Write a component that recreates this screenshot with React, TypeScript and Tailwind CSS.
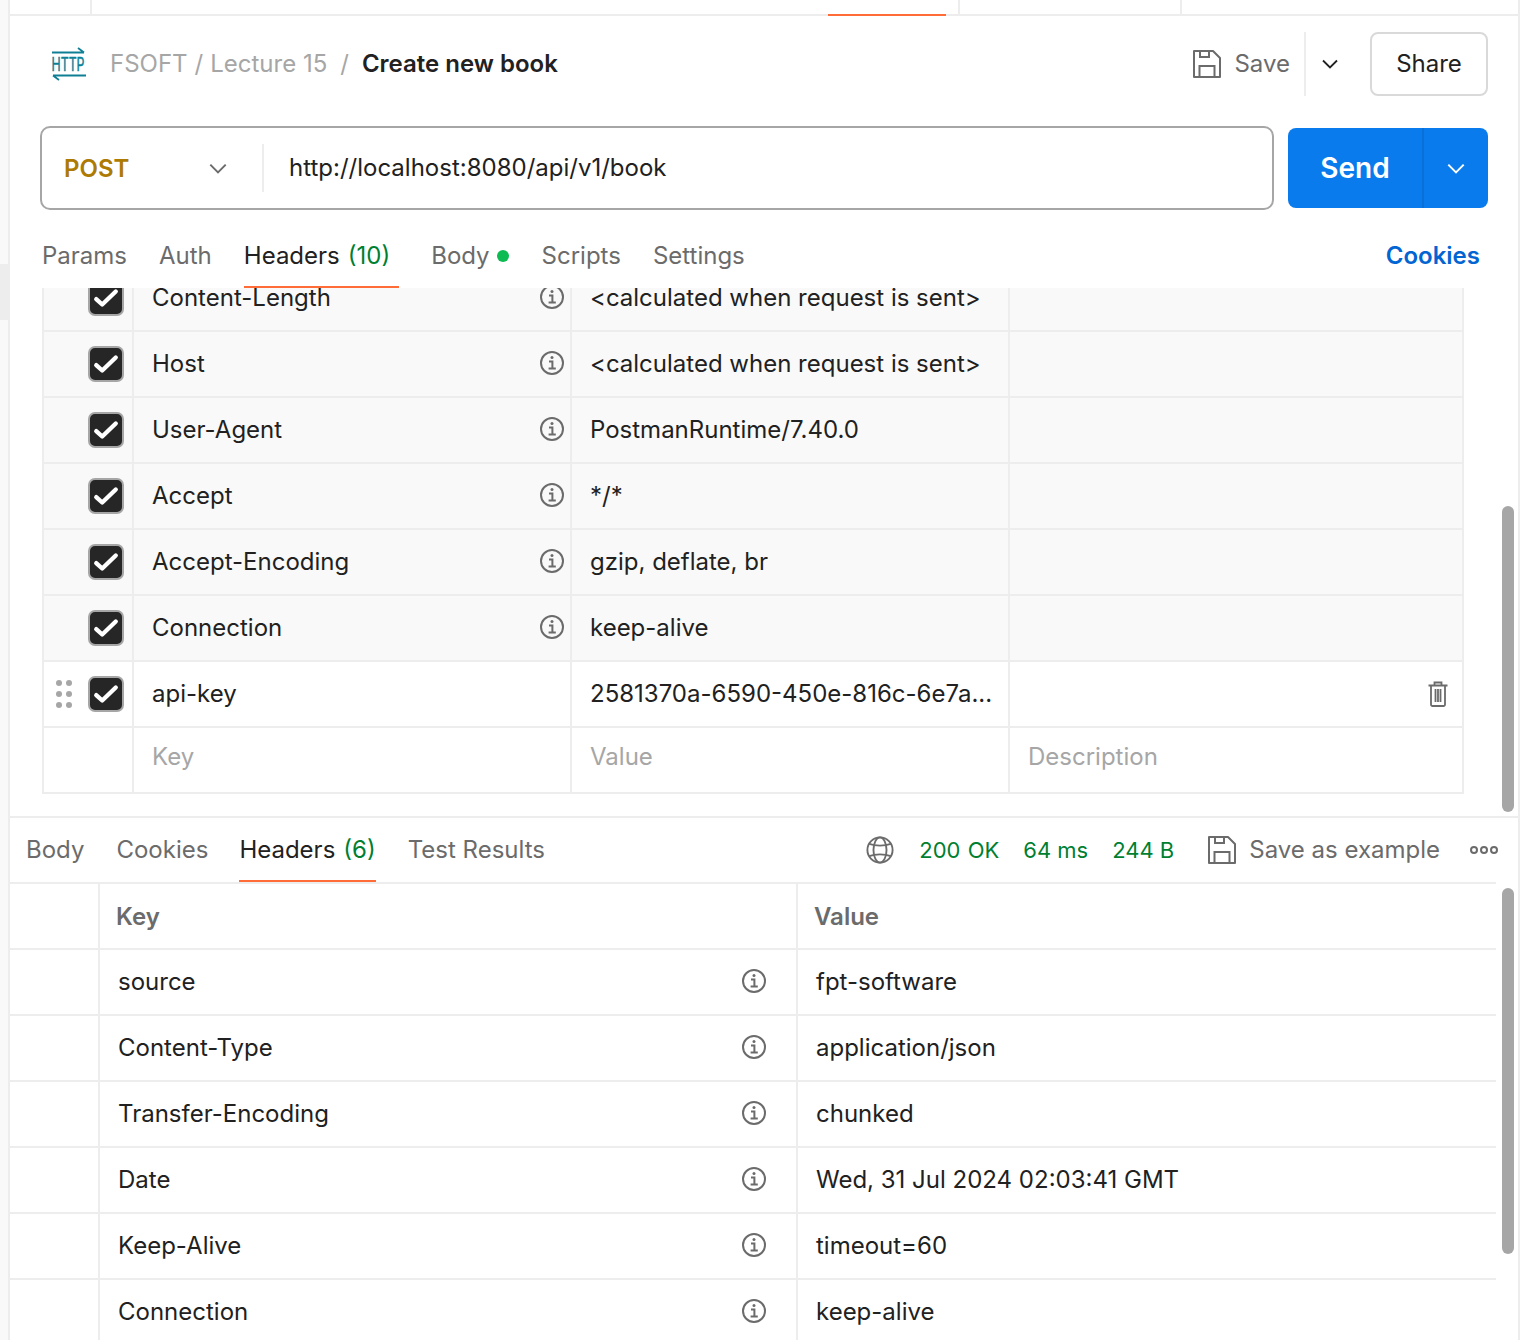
import React from "react";

const Chevron = ({ cls }: { cls: string }) => (
  <svg viewBox="0 0 16 10" className={cls} fill="none" stroke="currentColor" strokeWidth="1.800">
    <path d="M1 1.500 8 8.500 15 1.500" />
  </svg>
);

const Info = () => (
  <svg viewBox="0 0 24 24" className="w-6 h-6 mb-[2px] text-[#6b6b6b]" fill="none" stroke="currentColor">
    <circle cx="12" cy="12" r="11" strokeWidth="2" />
    <circle cx="12" cy="6.600" r="1.500" fill="currentColor" stroke="none" />
    <path d="M9 10.500h3.400v7M8.600 17.600h7.200" strokeWidth="2" />
  </svg>
);

const Floppy = ({ cls }: { cls: string }) => (
  <svg viewBox="0 0 28 28" className={cls} fill="none" stroke="currentColor" strokeWidth="2">
    <path d="M1 1h19l7 7v19H1z" strokeLinejoin="round" />
    <path d="M7 1v6h9V1M6.500 27V16h15v11" />
  </svg>
);

const Check = () => (
  <span className="w-9 h-9 rounded-[7px] bg-[#262626] border-2 border-[#a6a6a6] flex items-center justify-center shrink-0">
    <svg viewBox="0 0 24 24" className="w-[26px] h-[26px]" fill="none" stroke="#fff" strokeWidth="4" strokeLinecap="round" strokeLinejoin="round">
      <path d="M3 13l5.500 5L21 6" />
    </svg>
  </span>
);

const Grip = () => (
  <span className="absolute left-[12px] top-[18px] grid grid-cols-2 gap-x-[4px] gap-y-[5px]">
    {[0, 1, 2, 3, 4, 5].map((i) => (
      <span key={i} className="w-[6px] h-[6px] rounded-full bg-[#a6a6a6]" />
    ))}
  </span>
);

const Trash = () => (
  <svg viewBox="0 0 20 26" className="w-[20px] h-[26px] text-[#6b6b6b]" fill="none" stroke="currentColor" strokeWidth="1.800">
    <path d="M0.500 4.500h19M6.500 4V1.500h7V4M3 5v18.500a1.500 1.500 0 0 0 1.500 1.500h11a1.500 1.500 0 0 0 1.500-1.500V5M7.500 8v13M10 8v13M12.500 8v13" />
  </svg>
);

const Globe = () => (
  <svg viewBox="0 0 30 30" className="w-[28px] h-[30px] text-[#6b6b6b]" fill="none" stroke="currentColor" strokeWidth="2">
    <circle cx="15" cy="15" r="13.500" />
    <ellipse cx="15" cy="15" rx="7" ry="13.500" />
    <path d="M3.500 8.500c6 2.500 17 2.500 23 0M3.500 21.500c6-2.500 17-2.500 23 0" />
  </svg>
);

const HttpIcon = () => (
  <svg viewBox="0 0 36 34" className="w-[36px] h-[34px] text-[#0f7f94]" fill="none" stroke="currentColor" strokeWidth="1.800">
    <path d="M1 5.500h32M27 1l6 4.500M2 28.500h33M2 28.500l6 4.500" />
    <text x="0.500" y="23.500" fontSize="19" fill="currentColor" stroke="currentColor" strokeWidth="0.500" textLength="33" lengthAdjust="spacingAndGlyphs" fontFamily="Inter, sans-serif">HTTP</text>
  </svg>
);

const reqRows: [string, string][] = [
  ["Content-Length", "<calculated when request is sent>"],
  ["Host", "<calculated when request is sent>"],
  ["User-Agent", "PostmanRuntime/7.40.0"],
  ["Accept", "*/*"],
  ["Accept-Encoding", "gzip, deflate, br"],
  ["Connection", "keep-alive"],
];

const resRows: [string, string][] = [
  ["source", "fpt-software"],
  ["Content-Type", "application/json"],
  ["Transfer-Encoding", "chunked"],
  ["Date", "Wed, 31 Jul 2024 02:03:41 GMT"],
  ["Keep-Alive", "timeout=60"],
  ["Connection", "keep-alive"],
];

const Tab = ({ children, active, cls }: { children: React.ReactNode; active?: boolean; cls?: string }) => (
  <span className={`${active ? "text-[#212121]" : "text-[#6b6b6b]"} ${cls ?? ""}`}>{children}</span>
);

export default function App() {
  return (
    <div className="w-[1520px] h-[1340px] flex overflow-hidden bg-white text-[24px] leading-[32px] text-[#212121] font-['Inter',sans-serif]">
      <div className="w-[10px] shrink-0 bg-[#f9f9f9] border-r-2 border-[#ededed] flex flex-col">
        <div className="mt-[264px] h-[56px] bg-[#ededed]" />
      </div>

      <div className="flex-1 min-w-0 flex flex-col border-r-2 border-[#ededed]">
        {/* top tabs */}
        <div className="h-4 shrink-0 border-b-2 border-[#ededed] flex">
          <div className="w-[82px] border-r-2 border-[#ededed]" />
          <div className="w-[736px]" />
          <div className="w-[118px] -mb-[2px] border-b-2 border-[#ff6c37]" />
          <div className="w-[14px] border-r-2 border-[#ededed]" />
          <div className="w-[222px] border-r-2 border-[#ededed]" />
        </div>

        {/* breadcrumb */}
        <div className="h-[110px] shrink-0 flex items-start pt-[16px] pl-[41px] pr-[30px]">
          <div className="flex items-center h-16">
            <HttpIcon />
            <span className="ml-[23px] text-[#a6a6a6]">FSOFT</span>
            <span className="ml-[7px] text-[#a6a6a6]">/</span>
            <span className="ml-[7px] text-[#a6a6a6]">Lecture 15</span>
            <span className="ml-[13px] text-[#a6a6a6]">/</span>
            <span className="ml-[13px] font-semibold">Create new book</span>
          </div>
          <div className="ml-auto flex items-center h-16">
            <Floppy cls="w-[28px] h-[28px] text-[#6b6b6b]" />
            <span className="ml-[13px] text-[#6b6b6b]">Save</span>
            <span className="ml-[14px] w-[2px] h-16 bg-[#ededed]" />
            <Chevron cls="ml-[16px] w-[16px] h-[10px] text-[#212121]" />
            <span className="ml-[32px] w-[118px] h-16 rounded-[8px] border-2 border-[#d9d9d9] flex items-center justify-center">Share</span>
          </div>
        </div>

        {/* url row */}
        <div className="h-[84px] shrink-0 flex items-center pl-[30px] pr-[30px]">
          <div className="flex-1 h-[84px] rounded-[10px] border-2 border-[#a6a6a6] flex items-center">
            <span className="ml-[22px] mt-[2px] w-[145px] font-semibold text-[#ad7a03]">POST</span>
            <Chevron cls="w-[18px] h-[11px] text-[#6b6b6b]" />
            <span className="ml-[35px] w-[2px] h-[48px] bg-[#ededed]" />
            <span className="ml-[25px]">http://localhost:8080/api/v1/book</span>
          </div>
          <div className="ml-[14px] w-[200px] h-[80px] rounded-[8px] bg-[#097bed] flex items-center text-white">
            <span className="w-[134px] text-center text-[28px] font-semibold">Send</span>
            <span className="w-[2px] h-full bg-[#0a6fd6]" />
            <span className="flex-1 flex justify-center">
              <Chevron cls="w-[18px] h-[11px] text-white" />
            </span>
          </div>
        </div>

        {/* request tabs */}
        <div className="h-[78px] shrink-0 flex items-start pl-[32px] pr-[38px] pt-[30px] relative">
          <Tab>Params</Tab>
          <Tab cls="ml-[32px]">Auth</Tab>
          <Tab active cls="ml-[32px] relative">
            Headers<span className="ml-[8px] text-[#007f31]">(10)</span>
            <span className="absolute left-0 -right-[9px] top-[46px] h-[2px] bg-[#ff6c37]" />
          </Tab>
          <Tab cls="ml-[41px] flex items-center">
            Body<span className="ml-[7px] w-[12px] h-[12px] rounded-full bg-[#0cbb52]" />
          </Tab>
          <Tab cls="ml-[33px]">Scripts</Tab>
          <Tab cls="ml-[32px]">Settings</Tab>
          <span className="ml-auto font-semibold text-[#0265d2]">Cookies</span>
        </div>

        {/* request table */}
        <div className="h-[528px] shrink-0 overflow-hidden pl-[32px] pr-[54px] relative">
          <div className="-mt-[22px] border-x-2 border-b-2 border-[#ededed]">
            {reqRows.map(([k, v]) => (
              <div key={k} className="h-[66px] flex border-b-2 border-[#ededed] bg-[#f9f9f9]">
                <div className="w-[90px] shrink-0 border-r-2 border-[#ededed] pl-[44px] flex items-center"><Check /></div>
                <div className="w-[438px] shrink-0 border-r-2 border-[#ededed] pl-[18px] pr-[6px] flex items-center justify-between"><span>{k}</span><Info /></div>
                <div className="w-[438px] shrink-0 border-r-2 border-[#ededed] pl-[18px] flex items-center whitespace-nowrap">{v}</div>
                <div className="flex-1" />
              </div>
            ))}
            <div className="h-[66px] flex border-b-2 border-[#ededed] relative">
              <Grip />
              <div className="w-[90px] shrink-0 border-r-2 border-[#ededed] pl-[44px] flex items-center"><Check /></div>
              <div className="w-[438px] shrink-0 border-r-2 border-[#ededed] pl-[18px] flex items-center">api-key</div>
              <div className="w-[438px] shrink-0 border-r-2 border-[#ededed] pl-[18px] flex items-center whitespace-nowrap">2581370a-6590-450e-816c-6e7a...</div>
              <div className="flex-1 flex items-center justify-end pr-[14px]"><Trash /></div>
            </div>
            <div className="h-[64px] flex text-[#a6a6a6]">
              <div className="w-[90px] shrink-0 border-r-2 border-[#ededed]" />
              <div className="w-[438px] shrink-0 border-r-2 border-[#ededed] pl-[18px] pb-[6px] flex items-center">Key</div>
              <div className="w-[438px] shrink-0 border-r-2 border-[#ededed] pl-[18px] pb-[6px] flex items-center">Value</div>
              <div className="flex-1 pl-[18px] pb-[6px] flex items-center">Description</div>
            </div>
          </div>
          <div className="absolute right-[4px] top-[218px] w-[12px] h-[306px] rounded-full bg-[#a6a6a6]" />
        </div>

        {/* response tabs */}
        <div className="h-[66px] shrink-0 border-t-2 border-[#ededed] flex items-start pl-[16px] pt-[16px] relative">
          <Tab>Body</Tab>
          <Tab cls="ml-[32px]">Cookies</Tab>
          <Tab active cls="ml-[31px] relative">
            Headers<span className="ml-[8px] text-[#007f31]">(6)</span>
            <span className="absolute left-0 right-0 top-[46px] h-[2px] bg-[#ff6c37]" />
          </Tab>
          <Tab cls="ml-[32px]">Test Results</Tab>
          <div className="ml-auto flex items-center h-[32px] pr-[20px]">
            <Globe />
            <span className="ml-[25px] text-[#007f31] text-[22px] [word-spacing:1px]">200 OK</span>
            <span className="ml-[24px] text-[#007f31] text-[22px]">64 ms</span>
            <span className="ml-[24px] text-[#007f31] text-[22px]">244 B</span>
            <Floppy cls="ml-[34px] w-[28px] h-[28px] text-[#6b6b6b]" />
            <span className="ml-[13px] text-[#6b6b6b]">Save as example</span>
            <span className="ml-[30px] flex gap-[2px]">
              {[0, 1, 2].map((i) => (
                <span key={i} className="w-[8px] h-[8px] rounded-full border-2 border-[#6b6b6b]" />
              ))}
            </span>
          </div>
        </div>

        {/* response table */}
        <div className="flex-1 min-h-0 overflow-hidden relative">
          <div className="mr-[22px] border-t-2 border-[#ededed]">
            <div className="h-[66px] flex border-b-2 border-[#ededed] font-semibold text-[#6b6b6b]">
              <div className="w-[90px] shrink-0 border-r-2 border-[#ededed]" />
              <div className="w-[698px] shrink-0 border-r-2 border-[#ededed] pl-[16px] pt-[2px] flex items-center">Key</div>
              <div className="flex-1 pl-[16px] pt-[2px] flex items-center">Value</div>
            </div>
            {resRows.map(([k, v]) => (
              <div key={k} className="h-[66px] flex border-b-2 border-[#ededed]">
                <div className="w-[90px] shrink-0 border-r-2 border-[#ededed]" />
                <div className="w-[698px] shrink-0 border-r-2 border-[#ededed] pl-[18px] pr-[30px] flex items-center justify-between"><span>{k}</span><Info /></div>
                <div className="flex-1 pl-[18px] flex items-center">{v}</div>
              </div>
            ))}
          </div>
          <div className="absolute right-[4px] top-[6px] w-[12px] h-[366px] rounded-full bg-[#a6a6a6]" />
        </div>
      </div>
    </div>
  );
}
